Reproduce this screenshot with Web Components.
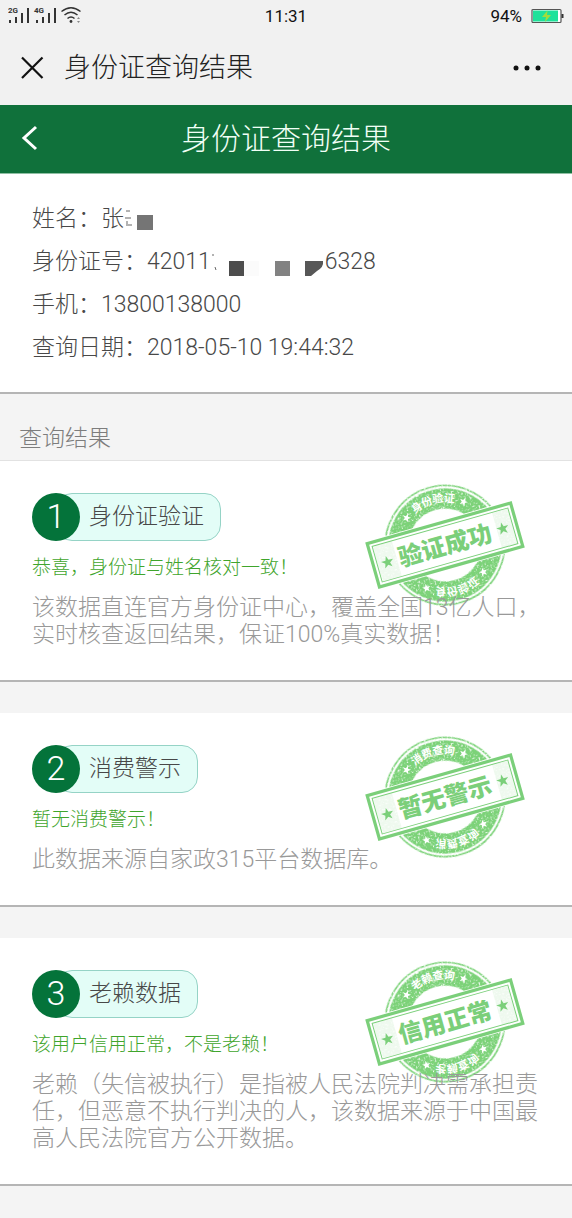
<!DOCTYPE html>
<html lang="zh-CN">
<head>
<meta charset="utf-8">
<meta name="viewport" content="width=device-width, initial-scale=1">
<title>身份证查询结果</title>
<style>
  body {
    margin: 0;
    background: #f4f4f4;
    color: #484848;
    font-family: Roboto, "Noto Sans CJK SC", sans-serif;
    font-weight: 300;
    font-size: 23px;
  }
</style>
</head>
<body>
<status-bar time="11:31" battery="94%"></status-bar>
<nav-bar>身份证查询结果</nav-bar>
<page-header>身份证查询结果</page-header>

<main>
  <info-panel>
    <info-row label="姓名：">张<mask-name></mask-name></info-row>
    <info-row label="身份证号：">42011<mask-number></mask-number>6328</info-row>
    <info-row label="手机：">13800138000</info-row>
    <info-row label="查询日期：">2018-05-10 19:44:32</info-row>
  </info-panel>

  <section-title>查询结果</section-title>

  <result-list>
    <result-card number="1" name="身份证验证" stamp="验证成功" ring="身份验证">
      <span slot="status">恭喜，身份证与姓名核对一致！</span>
      该数据直连官方身份证中心，覆盖全国13亿人口，实时核查返回结果，保证100%真实数据！
    </result-card>
    <result-card number="2" name="消费警示" stamp="暂无警示" ring="消费查询">
      <span slot="status">暂无消费警示！</span>
      此数据来源自家政315平台数据库。
    </result-card>
    <result-card number="3" name="老赖数据" stamp="信用正常" ring="老赖查询">
      <span slot="status">该用户信用正常，不是老赖！</span>
      老赖（失信被执行）是指被人民法院判决需承担责任，但恶意不执行判决的人，该数据来源于中国最高人民法院官方公开数据。
    </result-card>
  </result-list>
</main>

<script>
class BaseElement extends HTMLElement {
  constructor() {
    super();
    this.attachShadow({mode: "open"});
  }
  connectedCallback() {
    const template = document.createElement("template");
    template.innerHTML = this.style_() + this.html();
    this.shadowRoot.appendChild(template.content.cloneNode(true));
  }
  style_() {
    return `<style>
      * { box-sizing: border-box; margin: 0; padding: 0; }
      button { border: 0; background: none; color: inherit; font: inherit; cursor: pointer; }
      svg { display: block; }
      ${this.css()}
    </style>`;
  }
}

class StatusBar extends BaseElement {
  css() {
    return `
      :host {
        display: grid;
        grid-template-columns: 1fr auto 1fr;
        align-items: center;
        height: 31px;
        padding: 0 8px;
        background: #f1f1f1;
        color: #111;
        font: 400 17px Roboto, sans-serif;
      }
      .signal { display: flex; }
      .battery { display: flex; align-items: center; justify-content: flex-end; gap: 9px; }
    `;
  }
  html() {
    return `
      <div class="signal">
        <svg width="74" height="20" viewBox="0 0 74 20" fill="#333">
          <text x="0" y="7" font-family="Roboto" font-size="8" font-weight="700">2G</text>
          <path d="M1 14h2v3H1zM7 11h2v6H7zM13 7h2v10h-2zM19 2h2v15h-2z"/>
          <text x="26" y="7" font-family="Roboto" font-size="8" font-weight="700">4G</text>
          <path d="M28 14h2v3h-2zM34 11h2v6h-2zM40 7h2v10h-2zM46 2h2v15h-2z"/>
          <g fill="none" stroke="#333" stroke-width="1.5">
            <path d="M53.500 5.500Q63-2 72.500 5.500M56.500 9Q63 3.500 69.500 9M59.500 12.500Q63 9.500 66.500 12.500"/>
          </g>
          <circle cx="63" cy="15.500" r="1.400"/>
          <path d="M69 13l1.500-2 1.500 2zM69 15l1.500 2 1.500-2z" fill="#888"/>
        </svg>
      </div>
      <time>${this.getAttribute("time")}</time>
      <div class="battery">
        <span>${this.getAttribute("battery")}</span>
        <svg width="33" height="16" viewBox="0 0 33 16">
          <rect x="1" y="1.500" width="29" height="13" rx="1" fill="#fff" stroke="#555" stroke-width="1.200"/>
          <rect x="2" y="2.500" width="25" height="11" fill="#1fe29a"/>
          <path d="M30.500 6h2v4h-2z" fill="#333"/>
          <path d="M16.500 2.500L11 9h4l-1 5 6-7h-4z" fill="#a5dc3a"/>
        </svg>
      </div>
    `;
  }
}

class NavBar extends BaseElement {
  css() {
    return `
      :host {
        display: flex;
        align-items: center;
        height: 74px;
        padding: 0 28px 0 20px;
        background: #f1f1f1;
        color: #222;
      }
      h1 { flex: 1; margin-left: 20px; font-size: 27px; font-weight: 300; line-height: 40px; }
    `;
  }
  html() {
    return `
      <button type="button" aria-label="关闭">
        <svg width="24" height="24" viewBox="0 0 24 24" stroke="#111" stroke-width="2.200"><path d="M2 1.500l20.500 20.500M22.500 1.500L2 22"/></svg>
      </button>
      <h1><slot></slot></h1>
      <button type="button" aria-label="更多">
        <svg width="32" height="24" viewBox="0 0 32 24" fill="#111"><circle cx="4" cy="12" r="2.500"/><circle cx="15" cy="12" r="2.500"/><circle cx="26" cy="12" r="2.500"/></svg>
      </button>
    `;
  }
}

class PageHeader extends BaseElement {
  css() {
    return `
      :host {
        display: grid;
        grid-template-columns: 40px 1fr 40px;
        align-items: center;
        height: 68px;
        padding: 0 20px;
        border-bottom: 1px solid #8fbfa3;
        background: #10713b;
        color: #f0fff6;
      }
      h2 { text-align: center; font-size: 30px; font-weight: 300; line-height: 40px; }
    `;
  }
  html() {
    return `
      <button type="button" aria-label="返回">
        <svg width="20" height="28" viewBox="0 0 20 28" fill="none" stroke="#fff" stroke-width="3"><path d="M16 2L4 13l12 11"/></svg>
      </button>
      <h2><slot></slot></h2>
    `;
  }
}

class InfoPanel extends BaseElement {
  css() {
    return `
      :host {
        display: block;
        padding: 23px 32px;
        border-bottom: 2px solid #b5b5b5;
        background: #fff;
      }
    `;
  }
  html() {
    return `<slot></slot>`;
  }
}

class InfoRow extends BaseElement {
  css() {
    return `
      :host { display: flex; align-items: center; height: 43px; line-height: 43px; }
      .value { display: flex; align-items: center; white-space: pre; }
    `;
  }
  html() {
    return `<span>${this.getAttribute("label")}</span><span class="value"><slot></slot></span>`;
  }
}

// pixel blocks that hide the rest of the name
class MaskName extends BaseElement {
  css() {
    return `:host { display: block; }`;
  }
  html() {
    return `
      <svg width="30" height="28" viewBox="0 0 30 28">
        <path d="M2 6h4M1 13h6M3 16v3M2 20h6" stroke="#666" fill="none"/>
        <rect x="13" y="10" width="16" height="15" fill="#757575"/>
      </svg>
    `;
  }
}

// pixel blocks over the middle of the id number
class MaskNumber extends BaseElement {
  css() {
    return `:host { display: block; }`;
  }
  html() {
    return `
      <svg width="114" height="28" viewBox="0 0 114 28">
        <path d="M2 6v2M4 19l1 3" stroke="#666" fill="none"/>
        <rect x="18" y="13" width="15" height="15" fill="#4d4d4d"/>
        <rect x="33" y="13" width="15" height="15" fill="#fbfbfb"/>
        <rect x="64" y="13" width="15" height="15" fill="#828282"/>
        <path d="M94 13h18q1 6-6 10l-6 5h-6z" fill="#575757"/>
      </svg>
    `;
  }
}

class SectionTitle extends BaseElement {
  css() {
    return `
      :host {
        display: block;
        padding: 30px 19px 6px;
        border-bottom: 1px solid #e2e2e2;
        color: #7d7d7d;
      }
      h3 { font-size: inherit; font-weight: inherit; line-height: 30px; }
    `;
  }
  html() {
    return `<h3><slot></slot></h3>`;
  }
}

class ResultList extends BaseElement {
  css() {
    return `:host { display: flex; flex-direction: column; gap: 31px; padding-bottom: 31px; }`;
  }
  html() {
    return `<slot></slot>`;
  }
}

class ResultCard extends BaseElement {
  css() {
    return `
      :host {
        display: block;
        position: relative;
        padding: 32px;
        border-bottom: 2px solid #b5b5b5;
        background: #fff;
      }
      seal-stamp { position: absolute; top: 22px; right: 47px; }
      .content { position: relative; display: flex; flex-direction: column; gap: 13px; }
      .title { display: flex; }
      .number {
        position: relative;
        width: 48px;
        height: 48px;
        border-radius: 50%;
        background: #04733a;
        color: #fff;
        font-size: 34px;
        line-height: 46px;
        text-align: center;
      }
      .name {
        height: 48px;
        margin-left: -24px;
        padding: 0 16px 0 32px;
        border: 1px solid #95d3c6;
        border-radius: 16px;
        background: #e3fdf7;
        font-size: 23px;
        font-weight: 300;
        line-height: 46px;
      }
      .status { color: #3fa52c; font-size: 19px; line-height: 27px; }
      .text { margin-right: -4px; color: #999; line-height: 27px; }
    `;
  }
  html() {
    return `
      <seal-stamp text="${this.getAttribute("stamp")}" ring="${this.getAttribute("ring")}"></seal-stamp>
      <div class="content">
        <div class="title">
          <span class="number">${this.getAttribute("number")}</span>
          <h4 class="name">${this.getAttribute("name")}</h4>
        </div>
        <p class="status"><slot name="status"></slot></p>
        <p class="text"><slot></slot></p>
      </div>
    `;
  }
}

class SealStamp extends BaseElement {
  css() {
    return `
      :host { display: block; }
      text { font-family: "Noto Sans CJK SC", sans-serif; text-anchor: middle; }
      .ring { font-size: 11px; font-weight: 700; fill: #fff; }
      .main { font-size: 24px; font-weight: 900; fill: #7bcf7a; }
    `;
  }
  star(x, y, r) {
    const points = [];
    for(let i = 0; i < 10; i++) {
      const radius = i % 2 ? r * 0.4 : r;
      const angle = Math.PI * i / 5 - Math.PI / 2;
      points.push((x + radius * Math.cos(angle)).toFixed(2) + "," + (y + radius * Math.sin(angle)).toFixed(2));
    }
    return `<polygon points="${points.join(" ")}"/>`;
  }
  arc() {
    const letters = [...this.getAttribute("ring")].map((letter, i) =>
      `<text class="ring" y="-43" transform="rotate(${-21 + i * 14})">${letter}</text>`
    ).join("");
    const stars = [-39, 39].map((angle) =>
      `<g transform="rotate(${angle})" fill="#fff">${this.star(0, -47, 4.5)}</g>`
    ).join("");
    return letters + stars;
  }
  html() {
    return `
      <svg width="160" height="124" viewBox="-80 -62 160 124">
        <defs>
          <filter id="worn" x="-10%" y="-10%" width="120%" height="120%">
            <feTurbulence type="fractalNoise" baseFrequency="0.6" numOctaves="2" seed="4" result="noise"/>
            <feColorMatrix in="noise" type="matrix" values="0 0 0 0 0  0 0 0 0 0  0 0 0 0 0  4 0 0 0 -0.8" result="grain"/>
            <feComposite in="SourceGraphic" in2="grain" operator="in"/>
          </filter>
        </defs>
        <g transform="rotate(-15.800)">
          <g filter="url(#worn)">
            <g fill="none" stroke="#7bd278">
              <circle r="59.500" stroke-width="1.600"/>
              <circle r="46.500" stroke-width="20"/>
            </g>
          </g>
          ${this.arc()}
          <g transform="scale(1 -1)">${this.arc()}</g>
          <rect x="-77" y="-25" width="154" height="50" fill="#fff"/>
          <g fill="none" stroke="#7bcf7a">
            <rect x="-74.500" y="-22.500" width="149" height="45" stroke-width="3.200"/>
            <rect x="-70.500" y="-18.500" width="141" height="37" stroke-width="1"/>
          </g>
          <g filter="url(#worn)" fill="#7bcf7a" opacity="0.120">
            <rect x="-70" y="-18" width="20" height="36"/>
            <rect x="54" y="-18" width="16" height="36"/>
          </g>
          <g fill="#7bcf7a">${this.star(-60, 1, 6.5)}${this.star(60, 0, 6.5)}</g>
          <text class="main" y="9">${this.getAttribute("text")}</text>
        </g>
      </svg>
    `;
  }
}

window.customElements.define("status-bar", StatusBar);
window.customElements.define("nav-bar", NavBar);
window.customElements.define("page-header", PageHeader);
window.customElements.define("info-panel", InfoPanel);
window.customElements.define("info-row", InfoRow);
window.customElements.define("mask-name", MaskName);
window.customElements.define("mask-number", MaskNumber);
window.customElements.define("section-title", SectionTitle);
window.customElements.define("result-list", ResultList);
window.customElements.define("result-card", ResultCard);
window.customElements.define("seal-stamp", SealStamp);
</script>
</body>
</html>
